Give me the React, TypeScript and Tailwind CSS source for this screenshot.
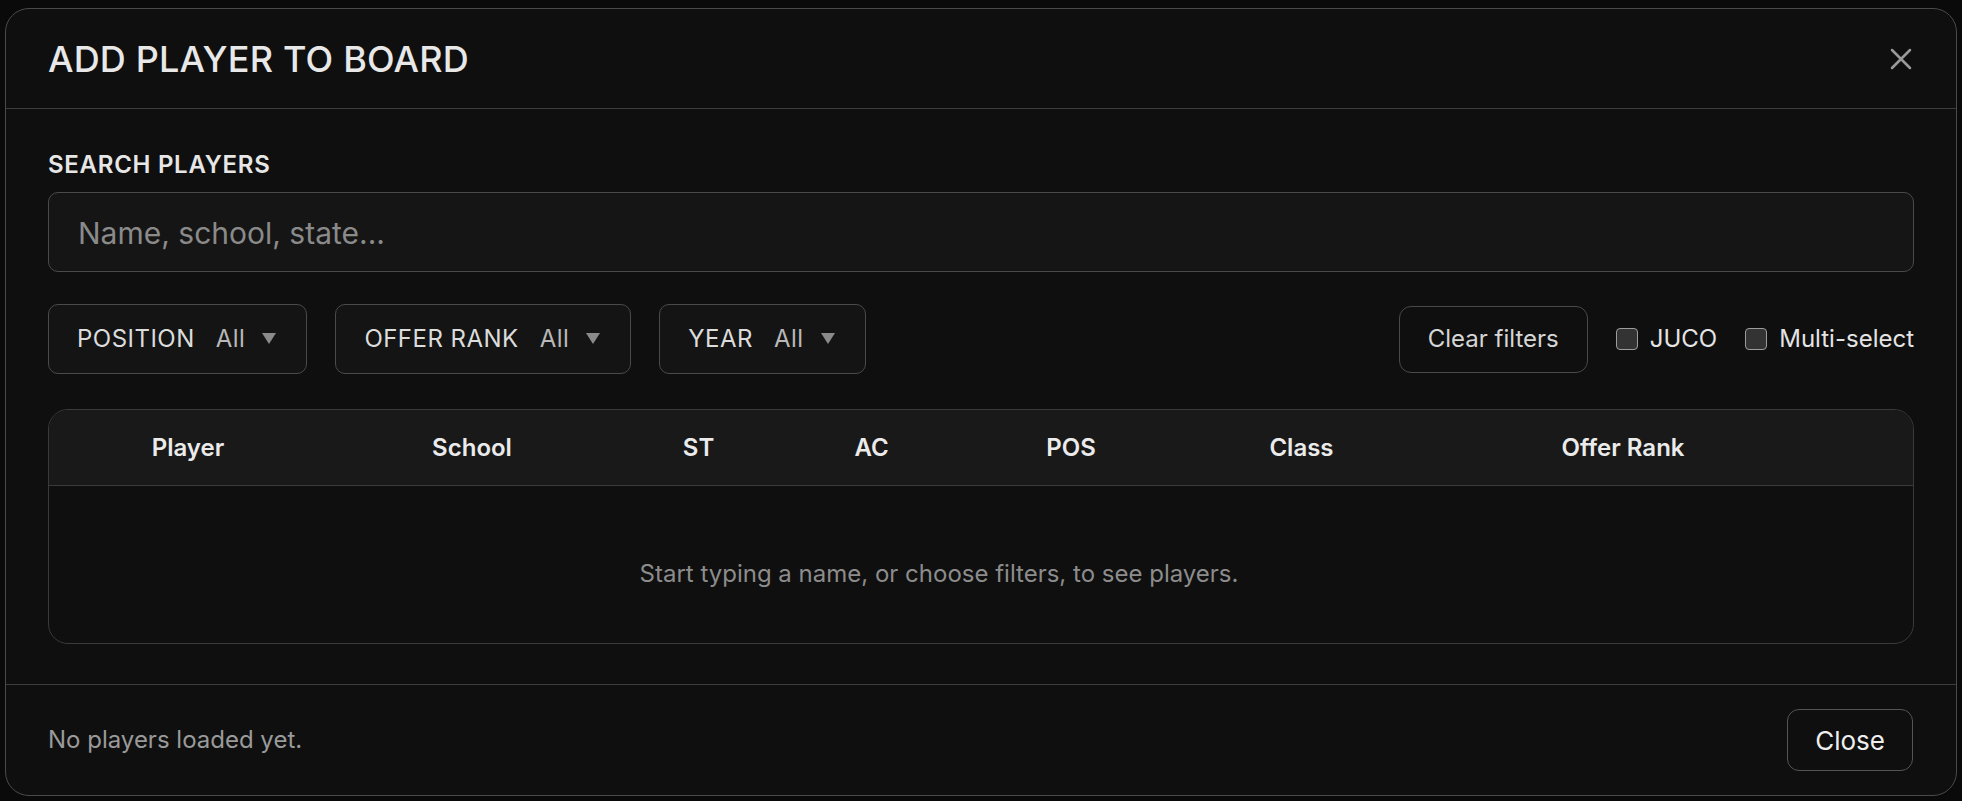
import React from 'react';

// Column layout for the results table (header labels are centered in each column)
const columns = [
  { label: 'Player', width: 'w-[278px]' },
  { label: 'School', width: 'w-[290px]' },
  { label: 'ST', width: 'w-[163px]' },
  { label: 'AC', width: 'w-[183px]' },
  { label: 'POS', width: 'w-[216px]' },
  { label: 'Class', width: 'w-[245px]' },
  { label: 'Offer Rank', width: 'w-[398px]' },
];

const filters = ['POSITION', 'OFFER RANK', 'YEAR'];

const FilterSelect: React.FC<{ label: string }> = ({ label }) => (
  <button className="flex h-[70px] items-center rounded-[10px] border border-[#4a4a4a] bg-[#141414] pl-[28px] pr-[30px] text-[24px] tracking-[0.02em] text-[#dcdcdc]">
    <span>{label}</span>
    <span className="ml-[21px] text-[#b8b8b8]">All</span>
    <svg width="14" height="11" viewBox="0 0 14 11" className="mb-[2px] ml-[17px]">
      <path d="M0 0 H14 L7 11 Z" fill="#8a8a8a" />
    </svg>
  </button>
);

const Checkbox: React.FC<{ label: string }> = ({ label }) => (
  <label className="flex items-center gap-[12px] text-[24px] text-[#e4e4e4]">
    <span className="h-[22px] w-[22px] rounded-[4px] border-[1.5px] border-[#9c9c9c] bg-[#333333]" />
    {label}
  </label>
);

const App: React.FC = () => {
  return (
    <div className="h-[801px] w-[1962px] bg-[#0a0a0a] px-[5px] pt-[8px] font-['Inter','Noto_Sans',sans-serif]">
      <div className="flex h-[788px] flex-col rounded-[24px] border border-[#4a4a4a] bg-[#0f0f0f]">
        {/* Header */}
        <div className="flex h-[100px] shrink-0 items-center justify-between border-b border-[#3c3c3c] pl-[42px] pr-[44px]">
          <h2 className="text-[36px] font-medium leading-none tracking-[0.005em] text-[#e8e8e8]">ADD PLAYER TO BOARD</h2>
          <svg width="22" height="22" viewBox="0 0 22 22" stroke="#9a9a9a" strokeWidth="2.5" strokeLinecap="round">
            <path d="M2 2 L20 20 M20 2 L2 20" />
          </svg>
        </div>

        {/* Body */}
        <div className="flex flex-col px-[42px] pb-[40px] pt-[42px]">
          <div className="text-[24px] font-semibold leading-[28px] tracking-[0.03em] text-[#e6e6e6]">SEARCH PLAYERS</div>
          <div className="mt-[13px] flex h-[80px] items-center rounded-[10px] border border-[#4a4a4a] bg-[#151515] px-[29px]">
            <span className="mt-[3px] text-[30px] text-[#8a8a8a]">Name, school, state...</span>
          </div>

          {/* Filters */}
          <div className="mt-[32px] flex items-center justify-between">
            <div className="flex gap-[28px]">
              {filters.map((f) => (
                <FilterSelect key={f} label={f} />
              ))}
            </div>
            <div className="flex items-center gap-[28px]">
              <button className="flex h-[67px] items-center rounded-[12px] border border-[#4a4a4a] bg-[#0f0f0f] px-[28px] text-[24px] text-[#d6d6d6]">
                Clear filters
              </button>
              <Checkbox label="JUCO" />
              <Checkbox label="Multi-select" />
            </div>
          </div>

          {/* Results table */}
          <div className="mt-[35px] overflow-hidden rounded-[20px] border border-[#3a3a3a]">
            <div className="flex h-[76px] items-center border-b border-[#3a3a3a] bg-[#191919]">
              {columns.map((c) => (
                <div key={c.label} className={`${c.width} text-center text-[24px] font-semibold text-[#ebebeb]`}>
                  {c.label}
                </div>
              ))}
            </div>
            <div className="pb-[55px] pr-[84px] pt-[74px] text-center text-[24px] leading-[28px] text-[#8c8c8c]">
              Start typing a name, or choose filters, to see players.
            </div>
          </div>
        </div>

        {/* Footer */}
        <div className="flex flex-1 items-center justify-between border-t border-[#3c3c3c] pl-[42px] pr-[43px]">
          <span className="text-[24px] text-[#9a9a9a]">No players loaded yet.</span>
          <button className="flex h-[62px] items-center rounded-[12px] border border-[#555555] bg-[#0f0f0f] px-[27px] text-[26px] text-[#eeeeee]">
            Close
          </button>
        </div>
      </div>
    </div>
  );
};

export default App;
